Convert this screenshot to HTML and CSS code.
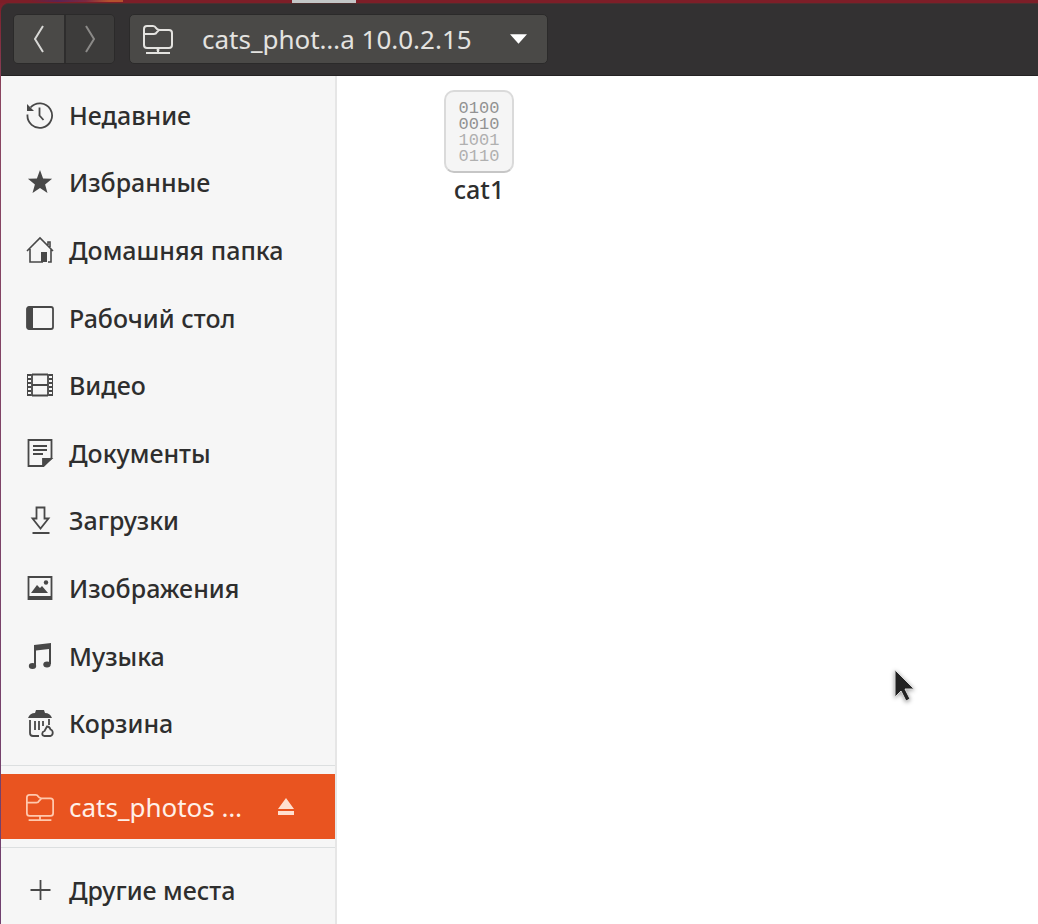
FILE: index.html
```
<!DOCTYPE html>
<html lang="ru">
<head>
<meta charset="utf-8">
<title>cats_photos</title>
<link rel="stylesheet" href="styles.css">
</head>
<body class="desktop">
<div class="desktop-edge"></div>
<div class="window">
  <header class="headerbar">
    <div class="history">
      <button class="nav-button" type="button" aria-label="Назад"><svg width="14" height="30" viewBox="0 0 14 30"><path d="M11 2 3 15l8 13" fill="none" stroke="currentColor" stroke-width="2"/></svg></button>
      <button class="nav-button nav-forward" type="button" aria-label="Вперёд"><svg width="14" height="30" viewBox="0 0 14 30"><path d="m3 2 8 13-8 13" fill="none" stroke="currentColor" stroke-width="2"/></svg></button>
    </div>
    <button class="path-button" type="button">
      <svg class="icon-large" viewBox="0 0 32 32" fill="none" stroke="currentColor" stroke-width="2"><path d="M2 22V6q0-3 3-3h6q2 0 3 2l1 1q1 1 3 1h9q3 0 3 3v12q0 3-3 3H5q-3 0-3-3ZM2 11h10q2 0 3-2l2-2M4 30h24M16 25v4" /><circle cx="16" cy="27" r="1.500" fill="currentColor" stroke="none"/></svg>
      <span class="path-label">cats_phot…a 10.0.2.15</span>
      <svg class="caret" viewBox="0 0 18 10"><path d="M0 0h18L9 10z" fill="currentColor"/></svg>
    </button>
  </header>
  <div class="content">
    <nav class="sidebar">
      <ul class="places">
        <li><a class="place" href="#recent"><svg class="icon" viewBox="0 0 28 28" fill="none" stroke="currentColor" stroke-width="1.800"><path d="M4.500 6.500A12.300 12.300 0 1 1 1.500 13.500M13.500 6.500v8l4 4.500"/><path d="M1 3v7h7z" fill="currentColor" stroke="none"/></svg>Недавние</a></li>
        <li><a class="place" href="#starred"><svg class="icon" viewBox="0 0 28 28"><path d="m14 2 3.100 8.400 9 .4-7 5.600 2.400 8.600L14 20l-7.500 5 2.400-8.600-7-5.600 9-.4z" fill="currentColor"/></svg>Избранные</a></li>
        <li><a class="place" href="#home"><svg class="icon" viewBox="0 0 28 28" fill="none" stroke="currentColor" stroke-width="1.600"><path d="M1 15 14 2l13 13M4 13v13h13M25 13v13h-3M22 9V6h2v5"/><path d="M15 16h6v10h-6z" fill="currentColor" stroke="none"/></svg>Домашняя папка</a></li>
        <li><a class="place" href="#desktop"><svg class="icon" viewBox="0 0 28 28"><rect x="1" y="3" width="26" height="22" rx="2" fill="none" stroke="currentColor" stroke-width="1.800"/><path d="M1 3h6v22H1z" fill="currentColor"/></svg>Рабочий стол</a></li>
        <li><a class="place" href="#videos"><svg class="icon" viewBox="0 0 28 28" fill="none" stroke="currentColor"><path d="M6 3.500h16M6 14h16M6 24.500h16" stroke-width="1.800"/><path d="M6 3v22M22 3v22" stroke-width="1.800"/><path d="M3 3v22M25 3v22" stroke-width="4" stroke-dasharray="2 2"/><path d="M1.500 3v22M26.500 3v22" stroke-width="1"/></svg>Видео</a></li>
        <li><a class="place" href="#documents"><svg class="icon" viewBox="0 0 28 28" fill="none" stroke="currentColor" stroke-width="1.800"><path d="M2.500 1h23v18l-8 8h-15zM7 7h14M7 11h14M7 15h10" /><path d="M17 27v-7h8z" fill="currentColor"/></svg>Документы</a></li>
        <li><a class="place" href="#downloads"><svg class="icon" viewBox="0 0 28 28" fill="none" stroke="currentColor" stroke-width="1.800"><path d="M10.500 1.500h8v11h4l-8 10-8-10h4zM6.500 27h17"/></svg>Загрузки</a></li>
        <li><a class="place" href="#pictures"><svg class="icon" viewBox="0 0 28 28"><path d="M2.500 3h23v22h-23z" fill="none" stroke="currentColor" stroke-width="1.800"/><path d="M2 22h24v4H2zM5 19l6-8 3 3 2-2 6 7z" fill="currentColor"/><circle cx="20" cy="8.500" r="2.200" fill="currentColor"/></svg>Изображения</a></li>
        <li><a class="place" href="#music"><svg class="icon" viewBox="0 0 28 28" fill="currentColor"><path d="M8 3 25 1v21h-2V7L10 8.500V24H8z"/><ellipse cx="6.500" cy="24" rx="3.700" ry="3"/><ellipse cx="21" cy="22.500" rx="3.700" ry="3"/></svg>Музыка</a></li>
        <li><a class="place" href="#trash"><svg class="icon" viewBox="0 0 28 28" fill="none" stroke="currentColor" stroke-width="1.800"><path d="M4 11v13q0 3 3 3h6M23 10v6M9 12v9M13 12v9M17 12v5"/><path d="M2 9q2-5 7-5l1-3h8l1 3q5 0 7 5z" fill="currentColor" stroke="none"/><path d="M21 17.500c3 0 3 2 3.500 3 3 1 3 5.500 0 6.500h-6c-3-.5-3-4 0-5z"/></svg>Корзина</a></li>
      </ul>
      <ul class="places-group">
        <li class="mount">
          <a class="place mount-link" href="#cats_photos"><svg class="icon" viewBox="0 0 32 32" fill="none" stroke="currentColor" stroke-width="2"><path d="M1 23V5q0-3 3-3h7q2 0 3 2l1 1q1 1 3 1h10q3 0 3 3v14q0 3-3 3H4q-3 0-3-3ZM1 11h11q2 0 3-2l3-3M3 31h26M16 26v4"/></svg>cats_photos …</a>
          <button class="eject" type="button" aria-label="Извлечь"><svg width="16" height="17" viewBox="0 0 16 17" fill="currentColor"><path d="m8 0 8 11H0zM0 13h16v4H0z"/></svg></button>
        </li>
      </ul>
      <ul class="places-group">
        <li class="other"><a class="place" href="#other"><svg class="icon" viewBox="0 0 28 28"><path d="M14.500 4v20M4.500 14h20" stroke="currentColor" stroke-width="1.800"/></svg>Другие места</a></li>
      </ul>
    </nav>
    <main class="files">
      <a class="file" href="#cat1">
        <span class="file-icon">0100<br>0010<br><span class="faded">1001<br>0110</span></span>
        <span>cat1</span>
      </a>
    </main>
  </div>
</div>
<svg class="pointer" viewBox="0 0 22 34"><path d="M2 2v27l6-6 5 10 4-2-5-10h9z" fill="#222" stroke="#ddd" stroke-width="1"/></svg>
</body>
</html>
```
FILE: styles.css
```
* { box-sizing: border-box; }

.desktop {
  margin: 0;
  min-height: 100vh;
  display: flex;
  flex-direction: column;
  background: linear-gradient(#7d1e28, #8a4560 10%, #70406f);
  color: #2e2e2e;
  font: 500 25px/32px "Noto Sans", sans-serif;
}

.desktop-edge {
  height: 3px;
  background:
    linear-gradient(#c3c6c7, #c3c6c7) 292px 0 / 64px 3px no-repeat,
    linear-gradient(90deg, transparent, #5b2352 30%, #7c2840 60%, #b5502e 85%, #b5502e) 30px 0 / 93px 2px no-repeat,
    #7d1e28;
}

.window {
  flex: 1;
  display: flex;
  flex-direction: column;
  margin-left: 1px;
}

.headerbar {
  display: flex;
  gap: 14px;
  padding: 10px 12px 11px;
  background: #333132;
  border-top: 1px solid #4a3030;
  border-bottom: 1px solid #242223;
  border-radius: 8px 0 0 0;
}

.history {
  display: flex;
  border-radius: 5px;
  overflow: hidden;
  border: 1px solid #2b2a2a;
}

button {
  border: 0;
  padding: 0;
  background: none;
  color: inherit;
  font: inherit;
}

.nav-button {
  display: flex;
  align-items: center;
  justify-content: center;
  width: 50px;
  background: #4a4947;
  color: #d8d8d6;
}

.nav-forward {
  border-left: 2px solid #2e2d2d;
  background: #3d3c3b;
  color: #8b8a88;
}

.path-button {
  display: flex;
  align-items: center;
  width: 419px;
  height: 50px;
  padding: 0 20px 0 12px;
  border: 1px solid #2b2a2a;
  border-radius: 5px;
  background: #4a4947;
  color: #e4e3e0;
  font-size: 26px;
  font-weight: 400;
}

.icon-large { width: 32px; height: 32px; }

.path-label { flex: 1; padding-left: 28px; text-align: left; }

.caret { width: 17px; height: 10px; color: #fff; }

.content { flex: 1; display: flex; }

.sidebar {
  display: flex;
  flex-direction: column;
  width: 336px;
  padding-top: 5px;
  background: #f6f6f6;
  border-right: 2px solid #e6e6e6;
}

.places, .places-group { margin: 0; padding: 0; list-style: none; }

.places { flex: 1; display: grid; grid-auto-rows: 1fr; }

.places-group {
  margin-top: 8px;
  padding-top: 8px;
  border-top: 1px solid #dcdfe0;
}

.place {
  display: flex;
  align-items: center;
  gap: 15px;
  height: 100%;
  padding-left: 25px;
  color: inherit;
  text-decoration: none;
  white-space: nowrap;
}

.icon { flex: none; width: 28px; height: 28px; color: #484848; }

.mount {
  display: flex;
  align-items: center;
  height: 65px;
  background: #e95420;
  color: #fff0e8;
}

.mount-link { flex: 1; font-size: 26px; font-weight: 400; }

.mount .icon { color: #ffc9ae; }

.eject { display: flex; margin-right: 41px; color: #ffe0d0; }

.other { height: 68px; }

.files { flex: 1; padding: 11px 0 0 107px; background: #fff; }

.file {
  display: inline-flex;
  flex-direction: column;
  align-items: center;
  color: inherit;
  text-decoration: none;
}

.file-icon {
  width: 70px;
  height: 83px;
  padding-top: 9px;
  border: 2px solid #dadada;
  border-bottom-color: #c6c6c6;
  border-radius: 10px;
  background: #f5f5f5;
  color: #929292;
  font: 17px/16px "Liberation Mono", monospace;
  text-align: center;
}

.faded { color: #b0b0b0; }

.pointer {
  position: absolute;
  left: 893px;
  top: 668px;
  width: 22px;
  height: 34px;
  filter: drop-shadow(0 1px 2px #0006);
}
```
